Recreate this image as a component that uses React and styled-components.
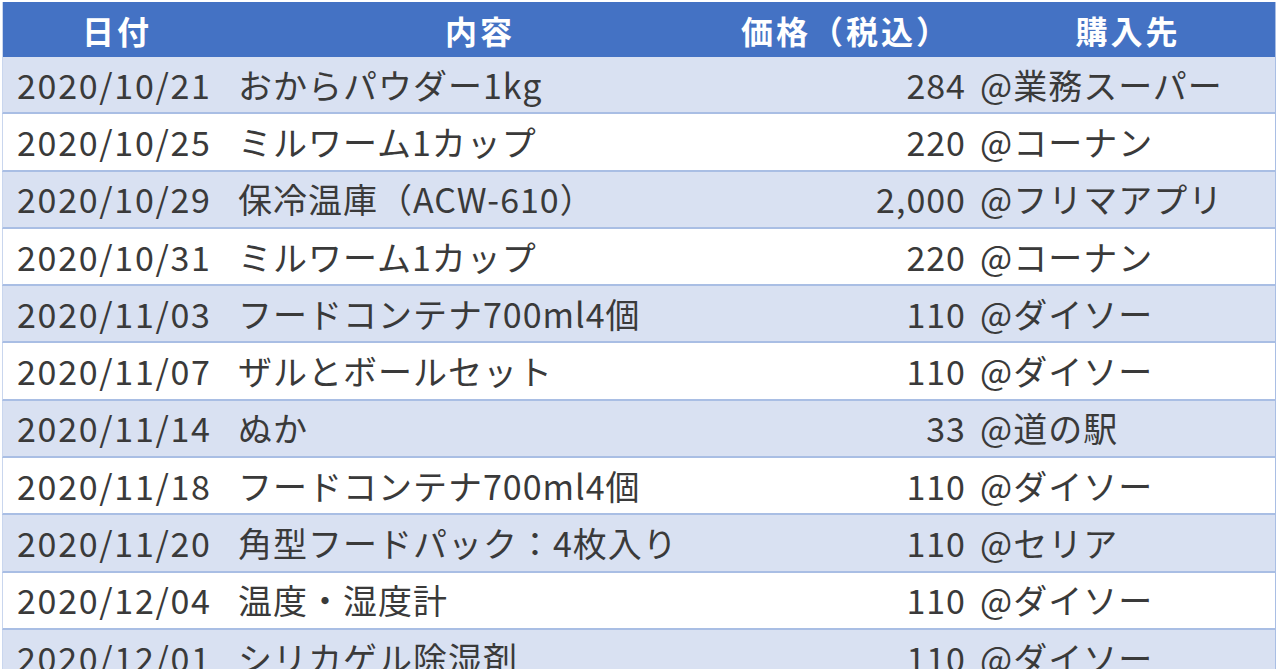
import React from "react";
import styled, { createGlobalStyle } from "styled-components";

const GlobalStyle = createGlobalStyle`
  html, body {
    margin: 0;
    padding: 0;
    background: #ffffff;
    overflow: hidden;
  }
  body {
    font-family: "Noto Sans CJK JP", "Noto Sans", sans-serif;
  }
`;

const Sheet = styled.div`
  padding: 2px 4px 0 2px;
`;

const Row = styled.div`
  display: grid;
  grid-template-columns: 226px 500px 240px 1fr;
  align-items: center;
  height: ${(p) => (p.$head ? "55px" : "57.3px")};
  box-sizing: border-box;
  background: ${(p) => (p.$head ? "#4472c4" : p.$band ? "#d9e1f2" : "#ffffff")};
  border-bottom: ${(p) => (p.$head ? "none" : "2px solid #a9bee4")};
  border-right: 1px solid #a9bee4;
  border-left: 1px solid #c9d6ee;
  color: ${(p) => (p.$head ? "#ffffff" : "#3a3a3a")};
  font-size: ${(p) => (p.$head ? "32px" : "34px")};
  font-weight: ${(p) => (p.$head ? 700 : 400)};
  letter-spacing: ${(p) => (p.$head ? "3px" : "1px")};
  white-space: nowrap;
`;

const Cell = styled.div`
  text-align: ${(p) => p.$align || "left"};
  padding: ${(p) => p.$pad || "0"};
  letter-spacing: ${(p) => p.$spacing || "inherit"};
  line-height: 1;
`;

const rows = [
  ["2020/10/21", "おからパウダー1kg", "284", "@業務スーパー"],
  ["2020/10/25", "ミルワーム1カップ", "220", "@コーナン"],
  ["2020/10/29", "保冷温庫（ACW-610）", "2,000", "@フリマアプリ"],
  ["2020/10/31", "ミルワーム1カップ", "220", "@コーナン"],
  ["2020/11/03", "フードコンテナ700ml4個", "110", "@ダイソー"],
  ["2020/11/07", "ザルとボールセット", "110", "@ダイソー"],
  ["2020/11/14", "ぬか", "33", "@道の駅"],
  ["2020/11/18", "フードコンテナ700ml4個", "110", "@ダイソー"],
  ["2020/11/20", "角型フードパック：4枚入り", "110", "@セリア"],
  ["2020/12/04", "温度・湿度計", "110", "@ダイソー"],
  ["2020/12/01", "シリカゲル除湿剤", "110", "@ダイソー"],
];

export default function App() {
  return (
    <Sheet>
      <GlobalStyle />
      <Row $head>
        <Cell $align="center" $pad="0 0 0 2px">日付</Cell>
        <Cell $align="center" $pad="0 0 0 2px">内容</Cell>
        <Cell $align="center" $pad="0 6px 0 0">価格（税込）</Cell>
        <Cell $align="center" $pad="0 0 0 12px">購入先</Cell>
      </Row>
      {rows.map((r, i) => (
        <Row key={i} $band={i % 2 === 0}>
          <Cell $pad="0 0 0 14px" $spacing="1.7px">{r[0]}</Cell>
          <Cell $pad="0 0 0 9px">{r[1]}</Cell>
          <Cell $align="right" $pad="0 3px 0 0">{r[2]}</Cell>
          <Cell $pad="0 0 0 11px">{r[3]}</Cell>
        </Row>
      ))}
    </Sheet>
  );
}
